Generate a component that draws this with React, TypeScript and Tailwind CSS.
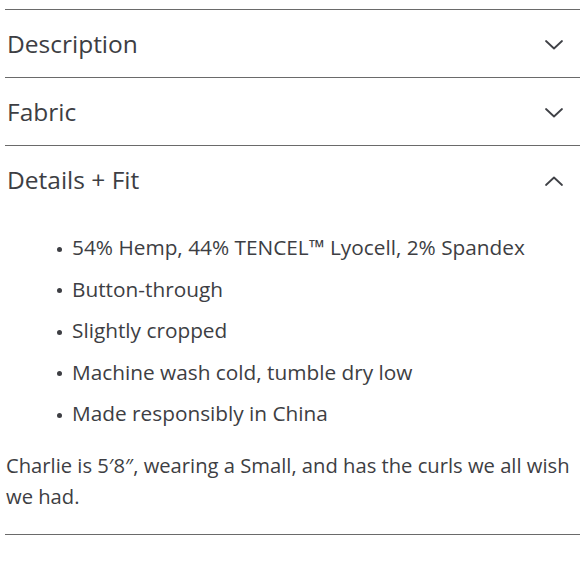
import React from "react";

const Chevron = ({ up }: { up?: boolean }) => (
  <svg width="20" height="12" viewBox="0 0 20 12" fill="none" className="block">
    {up ? (
      <path d="M2 10 L10 2.5 L18 10" stroke="#3f4146" strokeWidth="1.8" strokeLinecap="round" strokeLinejoin="round" />
    ) : (
      <path d="M2 2 L10 9.5 L18 2" stroke="#3f4146" strokeWidth="1.8" strokeLinecap="round" strokeLinejoin="round" />
    )}
  </svg>
);

const Header = ({ title, up }: { title: string; up?: boolean }) => (
  <div className="h-[68px] border-t-[1.5px] border-[#6a6a6a] flex items-center justify-between pl-[2px] pr-[16px] pt-[2px]">
    <span className="text-[24.5px] text-[#3d3e43] font-medium">{title}</span>
    <Chevron up={up} />
  </div>
);

const items = [
  "54% Hemp, 44% TENCEL™ Lyocell, 2% Spandex",
  "Button-through",
  "Slightly cropped",
  "Machine wash cold, tumble dry low",
  "Made responsibly in China",
];

export default function App() {
  return (
    <div className="w-[580px] h-[580px] bg-white overflow-hidden pt-[9px] pl-[5px]" style={{ fontFamily: "'Open Sans', 'Noto Sans', sans-serif" }}>
      <Header title="Description" />
      <Header title="Fabric" />
      <Header title="Details + Fit" up />
      <ul className="mt-[14px] pl-[52px]">
        {items.map((t) => (
          <li key={t} className="h-[41.5px] flex items-center text-[20.8px] text-[#3d3e43]">
            <span className="w-[5px] h-[5px] rounded-full bg-[#3d3e43] mr-[10px] shrink-0 mt-[3px]" />
            {t}
          </li>
        ))}
      </ul>
      <p className="mt-[15px] pl-[1px] text-[20.2px] leading-[31px] text-[#3d3e43]">
        Charlie is 5′8″, wearing a Small, and has the curls we all wish we had.
      </p>
      <div className="mt-[22px] border-t-[1.5px] border-[#6a6a6a]" />
    </div>
  );
}
